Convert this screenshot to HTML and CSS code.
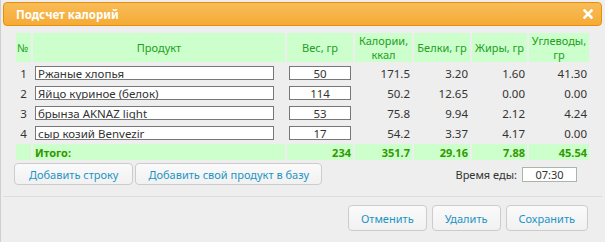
FILE: index.html
```html
<!DOCTYPE html>
<html lang="ru">
<head>
  <meta charset="UTF-8" />
  <title>Подсчет калорий</title>
  <link rel="stylesheet" href="styles.css">
</head>
<body>
  <div class="dialog">
    <div class="titlebar">
      <span class="title">Подсчет калорий</span>
      <span class="close">
        <svg width="10" height="10" viewBox="0 0 10 10"><path d="M1.5 1.5 L8.5 8.5 M8.5 1.5 L1.5 8.5" stroke="#fff" stroke-width="2.6" stroke-linecap="square"/></svg>
      </span>
    </div>

    <div class="content">
      <table class="calc">
        <colgroup>
          <col style="width:15px"><col style="width:252px"><col style="width:66px"><col style="width:57px"><col style="width:56px"><col style="width:55px"><col style="width:60px">
        </colgroup>
        <thead>
          <tr>
            <th>№</th>
            <th>Продукт</th>
            <th>Вес, гр</th>
            <th>Калории,<br>ккал</th>
            <th>Белки, гр</th>
            <th>Жиры, гр</th>
            <th>Углеводы,<br>гр</th>
          </tr>
        </thead>
        <tbody>
          <tr>
            <td class="num">1</td>
            <td><input class="product" value="Ржаные хлопья"></td>
            <td><input class="weight" value="50"></td>
            <td class="val">171.5</td><td class="val">3.20</td><td class="val">1.60</td><td class="val">41.30</td>
          </tr>
          <tr>
            <td class="num">2</td>
            <td><input class="product" value="Яйцо куриное (белок)"></td>
            <td><input class="weight" value="114"></td>
            <td class="val">50.2</td><td class="val">12.65</td><td class="val">0.00</td><td class="val">0.00</td>
          </tr>
          <tr>
            <td class="num">3</td>
            <td><input class="product" value="брынза AKNAZ light"></td>
            <td><input class="weight" value="53"></td>
            <td class="val">75.8</td><td class="val">9.94</td><td class="val">2.12</td><td class="val">4.24</td>
          </tr>
          <tr>
            <td class="num">4</td>
            <td><input class="product" value="сыр козий Benvezir"></td>
            <td><input class="weight" value="17"></td>
            <td class="val">54.2</td><td class="val">3.37</td><td class="val">4.17</td><td class="val">0.00</td>
          </tr>
        </tbody>
        <tfoot>
          <tr class="total">
            <td></td>
            <td class="label">Итого:</td>
            <td>234</td><td>351.7</td><td>29.16</td><td>7.88</td><td>45.54</td>
          </tr>
        </tfoot>
      </table>

      <div class="actions">
        <div class="left-btns">
          <button class="btn">Добавить строку</button>
          <button class="btn">Добавить свой продукт в базу</button>
        </div>
        <label class="meal-time">Время еды: <input value="07:30"></label>
      </div>
    </div>

    <div class="buttonpane">
      <button class="btn big">Отменить</button>
      <button class="btn big">Удалить</button>
      <button class="btn big">Сохранить</button>
    </div>
  </div>
</body>
</html>
```

FILE: styles.css
```css
body {
  margin: 0;
  background-color: #eeeeee;
  font-family: 'Noto Sans', 'Open Sans', sans-serif;
  font-size: 11px;
  color: #333;
}

.dialog {
  height: 242px;
  box-sizing: border-box;
  border-left: 1px solid #cfcfcf;
  padding: 2px 3px 0 2px;
}

.titlebar {
  height: 24px;
  box-sizing: border-box;
  border: 1px solid #e78f08;
  border-radius: 4px;
  background: linear-gradient(#f8bc58, #f5ab36);
  display: flex;
  align-items: center;
  justify-content: space-between;
  padding: 0 8px 0 12px;
}

.title {
  color: #fff;
  font-weight: bold;
  font-size: 11.5px;
}

.close {
  display: flex;
}

.content {
  padding-top: 5px;
}

.calc {
  margin-left: 11px;
  border-spacing: 2px;
  table-layout: fixed;
  width: 577px;
}

.calc th {
  background-color: #ccffcc;
  color: #22a022;
  font-weight: normal;
  font-size: 11px;
  line-height: 14px;
  height: 29px;
  padding: 0;
}

.calc th:first-child {
  text-align: left;
  padding-left: 1px;
}

.calc td {
  height: 18px;
  padding: 0 2px;
  white-space: nowrap;
}

.calc td.num {
  text-align: center;
  font-size: 11.5px;
}

.calc td.val {
  text-align: right;
  font-size: 11.5px;
}

.calc input {
  box-sizing: border-box;
  height: 14px;
  border: 1px solid #777;
  background: #fff;
  font-family: inherit;
  font-size: 11.5px;
  color: #333;
  padding: 0 2px;
  margin: 0;
  display: block;
}

.calc input.product {
  width: 239px;
}

.calc input.weight {
  width: 62px;
  text-align: center;
}

.total td {
  background-color: #ccffcc;
  color: #339900;
  font-weight: bold;
  font-size: 11px;
  text-align: right;
  height: 16px;
}

.total td.label {
  text-align: left;
}

.actions {
  display: flex;
  justify-content: space-between;
  align-items: center;
  width: 577px;
  margin-left: 11px;
  margin-top: 1px;
}

.left-btns {
  display: flex;
  gap: 2px;
}

.btn {
  font-family: inherit;
  font-size: 11px;
  color: #1c94c4;
  background: linear-gradient(#fafafa, #f1f1f1);
  border: 1px solid #cccccc;
  border-radius: 4px;
  height: 22px;
  padding: 0 14px;
  cursor: pointer;
}

.left-btns .btn + .btn {
  padding: 0 12px;
}

.meal-time {
  font-size: 11px;
  color: #333;
  display: flex;
  align-items: center;
  gap: 5px;
  padding-right: 14px;
}

.meal-time input {
  box-sizing: border-box;
  width: 55px;
  height: 15px;
  border: 1px solid #a7b8a7;
  background: #fff;
  font-family: inherit;
  font-size: 11px;
  text-align: center;
  color: #333;
  padding: 0;
}

.buttonpane {
  margin-top: 11px;
  border-top: 1px solid #dddddd;
  display: flex;
  justify-content: flex-end;
  gap: 5px;
  padding: 8px 14px 0 0;
}

.btn.big {
  height: 26px;
  padding: 0 12px;
}
```
